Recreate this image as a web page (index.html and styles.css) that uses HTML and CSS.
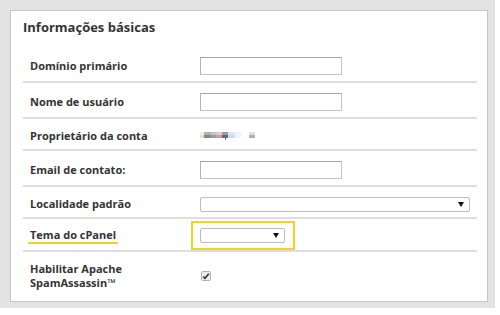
FILE: index.html
```html
<!DOCTYPE html>
<html lang="pt">
<head>
  <meta charset="UTF-8">
  <title>Informações básicas</title>
  <link rel="stylesheet" href="styles.css">
</head>
<body>

<div class="page">
  <div class="panel">
    <h2>Informações básicas</h2>

    <div class="form-row">
      <label>Domínio primário</label>
      <input type="text" class="text-input">
    </div>
    <div class="form-row">
      <label>Nome de usuário</label>
      <input type="text" class="text-input">
    </div>
    <div class="form-row short">
      <label>Proprietário da conta</label>
      <!-- blurred owner name -->
      <svg class="owner" width="56" height="10" viewBox="0 0 56 10">
        <rect x="0" y="1" width="4" height="3" fill="#f3ebe3"/>
        <rect x="0" y="4" width="4" height="3" fill="#e6ddd6"/>
        <rect x="4" y="1" width="7" height="3" fill="#a9b3c4"/>
        <rect x="4" y="4" width="7" height="3" fill="#8c8385"/>
        <rect x="11" y="1" width="5" height="3" fill="#c2c4c8"/>
        <rect x="11" y="4" width="5" height="3" fill="#9b9b9e"/>
        <rect x="16" y="1" width="6" height="3" fill="#e6cbc4"/>
        <rect x="16" y="4" width="6" height="3" fill="#c9a39a"/>
        <rect x="22" y="1" width="6" height="3" fill="#8f9fb6"/>
        <rect x="22" y="4" width="6" height="3" fill="#5e6a7c"/>
        <rect x="25" y="7" width="1" height="2" fill="#6b6f78"/>
        <rect x="28" y="1" width="7" height="3" fill="#dbe6f4"/>
        <rect x="28" y="4" width="7" height="3" fill="#cfdbe9"/>
        <rect x="35" y="1" width="6" height="6" fill="#eef4fa"/>
        <rect x="49" y="1" width="6" height="3" fill="#e9dfd9"/>
        <rect x="49" y="4" width="6" height="3" fill="#b4adad"/>
      </svg>
    </div>
    <div class="form-row">
      <label>Email de contato:</label>
      <input type="text" class="text-input">
    </div>
    <div class="form-row short">
      <label>Localidade padrão</label>
      <span class="select-wrap wide"><select></select></span>
    </div>
    <div class="form-row marked">
      <label><span class="mark-line">Tema do cPanel</span></label>
      <span class="highlight">
        <span class="select-wrap narrow"><select></select></span>
      </span>
    </div>
    <div class="form-row last">
      <label>Habilitar Apache<br>SpamAssassin™</label>
      <svg class="check" width="10" height="10" viewBox="0 0 10 10">
        <rect x="0.5" y="0.5" width="9" height="9" rx="1.5" fill="#ececec" stroke="#b3b3b3"/>
        <path d="M2.3 5.6 L4 7.3 L7.8 2.8" fill="none" stroke="#333" stroke-width="1.6"/>
      </svg>
    </div>
  </div>
</div>

</body>
</html>
```

FILE: styles.css
```css
body {
  margin: 0;
  font-family: "Open Sans", "DejaVu Sans", sans-serif;
  background-color: #fff;
}
.page {
  width: 495px;
  height: 308px;
  box-sizing: border-box;
  padding: 10px 7px 6px 10px;
  background-color: #e3e3e3;
}
.panel {
  height: 100%;
  box-sizing: border-box;
  background-color: #fff;
  border: 1px solid #c6c6c6;
  padding: 0 10px 0 12px;
}
h2 {
  margin: 0 0 10px;
  padding-top: 7px;
  font-size: 13px;
  line-height: 19px;
  font-weight: 700;
  color: #333;
}
.form-row {
  display: flex;
  align-items: center;
  height: 36px;
  box-sizing: border-box;
  padding-top: 4px;
  border-bottom: 2px solid #dedede;
}
.form-row.short {
  height: 32px;
}
.form-row.marked {
  height: 33px;
  padding-top: 2px;
}
.form-row.last {
  height: auto;
  padding: 10px 0;
  border-bottom: none;
}
.form-row label {
  width: 177px;
  flex-shrink: 0;
  box-sizing: border-box;
  padding-left: 7px;
  font-size: 11px;
  line-height: 14px;
  font-weight: 700;
  color: #333;
}
.text-input {
  width: 142px;
  height: 18px;
  box-sizing: border-box;
  margin: 0;
  padding: 0 3px;
  border: 1px solid #c4c4c4;
  border-top-color: #a6a6a6;
  border-left-color: #b4b4b4;
  border-radius: 0;
  background: #fff;
}
.owner {
  display: block;
}
.select-wrap {
  position: relative;
  display: block;
  height: 15px;
}
.select-wrap select {
  display: block;
  width: 100%;
  height: 15px;
  margin: 0;
  padding: 0;
  border: 1px solid #bdbdbd;
  border-radius: 2px;
  background: #fff;
  -webkit-appearance: none;
  appearance: none;
}
.select-wrap::after {
  content: "";
  position: absolute;
  right: 6px;
  top: 5px;
  border-style: solid;
  border-width: 5px 3px 0 3px;
  border-color: #111 transparent transparent transparent;
}
.select-wrap.wide {
  width: 270px;
}
.select-wrap.narrow {
  width: 85px;
}
.highlight {
  display: block;
  margin-left: -9px;
  padding: 5px 8px 5px 7px;
  border: 2px solid #f3d224;
}
.mark-line {
  display: inline-block;
  margin-left: -2px;
  padding: 0 2px;
  border-bottom: 2px solid #f3d224;
}
.check {
  display: block;
  margin-left: 1px;
}
```
